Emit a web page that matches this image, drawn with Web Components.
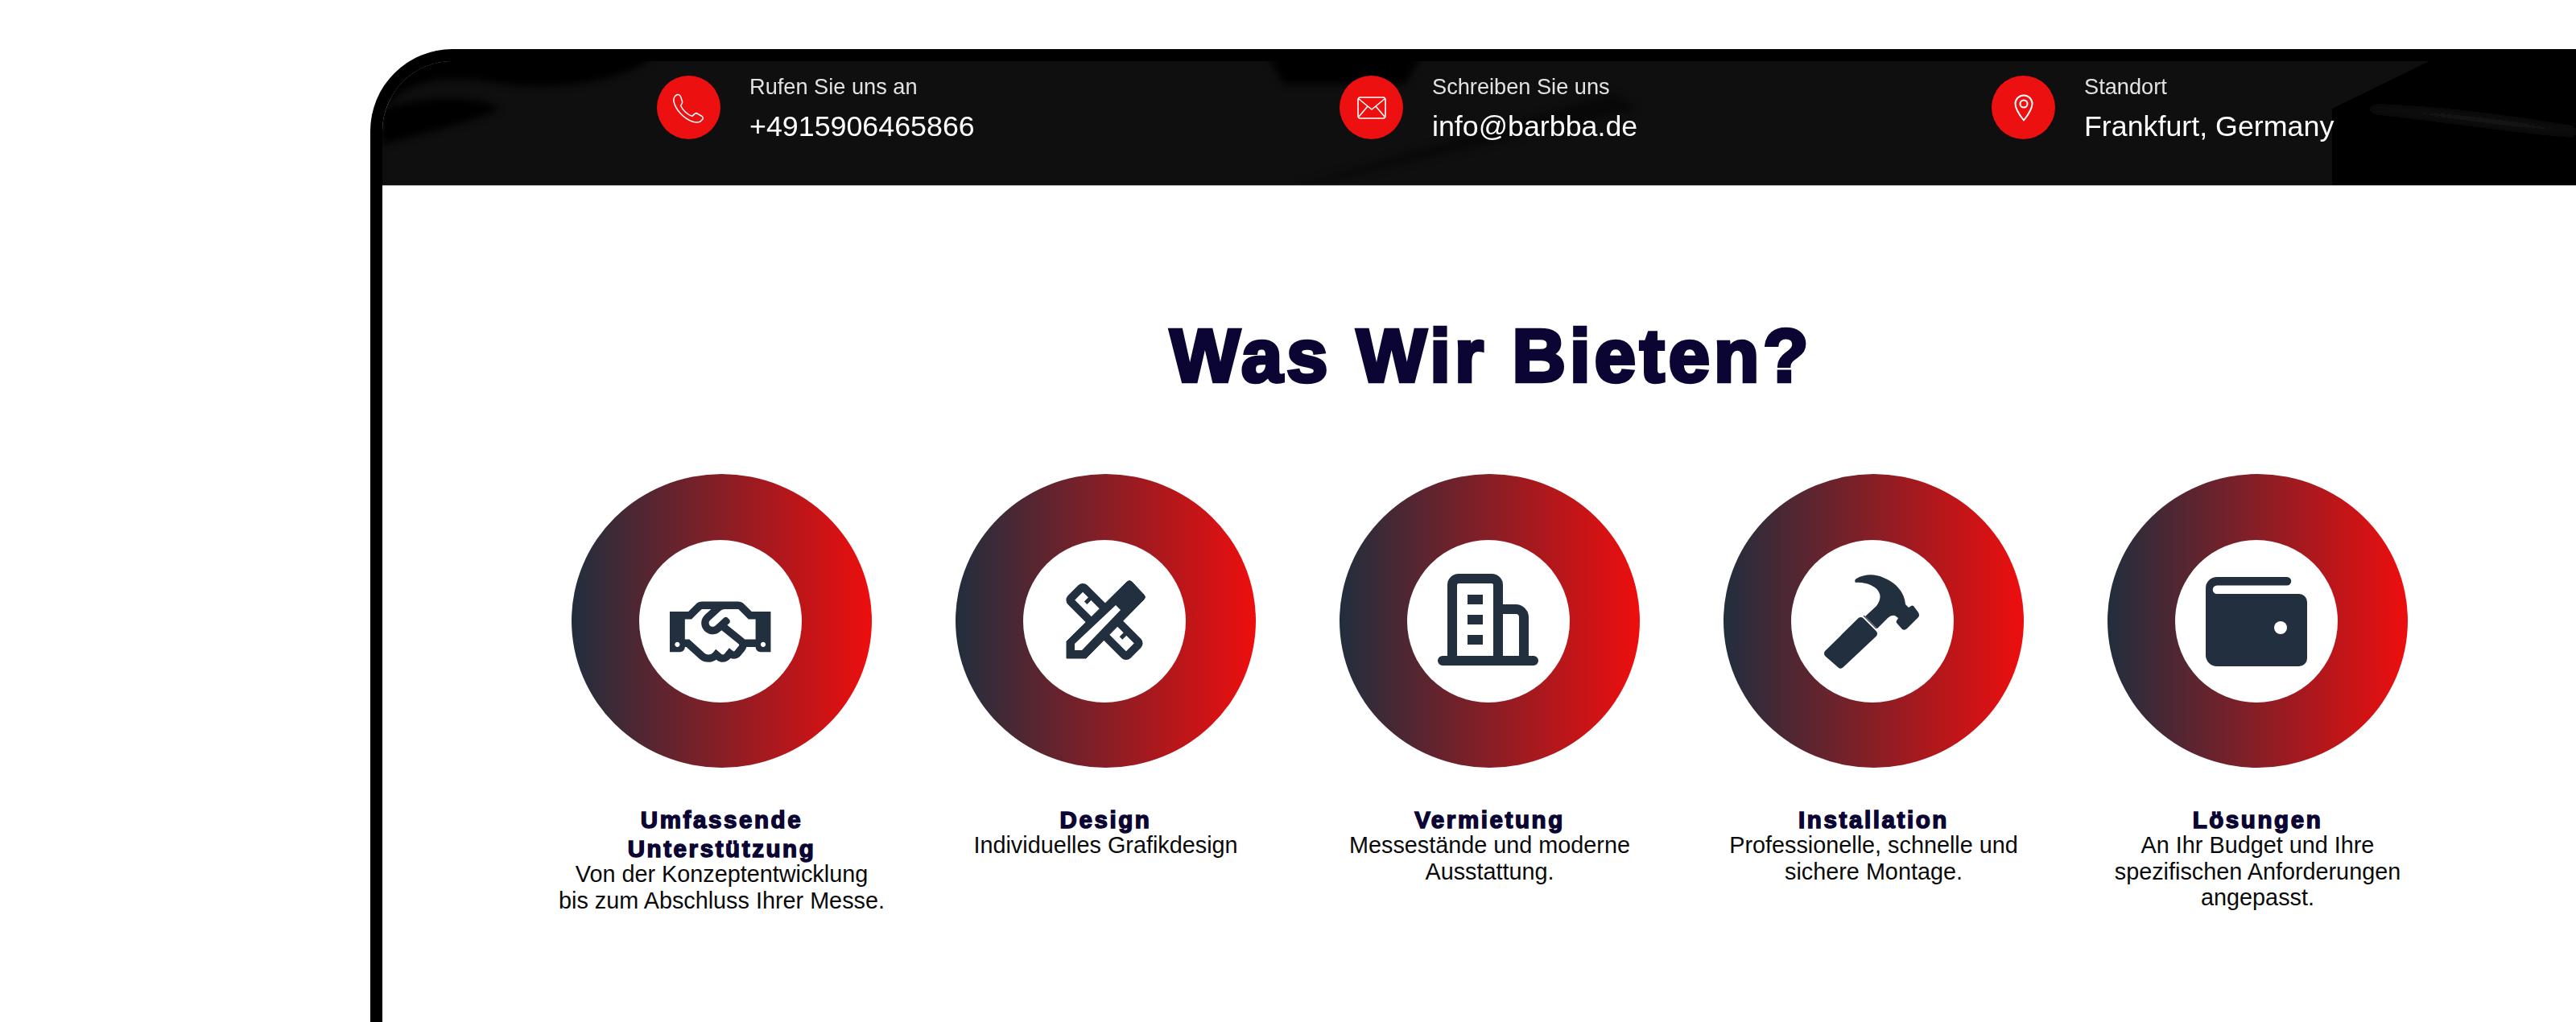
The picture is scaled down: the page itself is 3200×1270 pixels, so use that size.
<!DOCTYPE html>
<html lang="de">
<head>
<meta charset="utf-8">
<title>Was Wir Bieten?</title>
<style>
  html, body { margin: 0; height: 100%; overflow: hidden; background: #fff; font-family: "Liberation Sans", Arial, sans-serif; }
</style>
</head>
<body>
<device-frame>
  <contact-bar>
    <contact-item>
      <svg slot="icon" width="40" height="40" viewBox="0 0 40 40" fill="none" stroke="#fff" stroke-width="1.5" stroke-linejoin="round"><path d="M3 5 5.500 3.500Q8 3 9.500 6L11.500 12Q12 15 9.500 17C12 23 18 28.500 24 30.500Q26 27.500 29 26.500L36 30.500Q38 32 37 34L34 37Q30 39 24 37C13 33 3 22 1 12Q.5 7 3 5Z"/></svg>
      <span slot="label">Rufen Sie uns an</span>
      <span slot="value">+4915906465866</span>
    </contact-item>
    <contact-item>
      <svg slot="icon" width="36" height="28" viewBox="0 0 36 28" fill="none" stroke="#fff" stroke-width="1.6" stroke-linejoin="round"><rect x="1" y="1" width="34" height="26" rx="3"/><path d="M2 3 18 16 34 3M2 25 13 12M34 25 23 12"/></svg>
      <span slot="label">Schreiben Sie uns</span>
      <span slot="value">info@barbba.de</span>
    </contact-item>
    <contact-item>
      <svg slot="icon" width="24" height="34" viewBox="0 0 24 34" fill="none" stroke="#fff" stroke-width="2" stroke-linejoin="round"><path d="M12 32.500C6 25 1.500 18 1.500 12A10.500 10.500 0 0 1 22.500 12C22.500 18 18 25 12 32.500Z"/><circle cx="12" cy="12" r="4.500"/></svg>
      <span slot="label">Standort</span>
      <span slot="value">Frankfurt, Germany</span>
    </contact-item>
  </contact-bar>

  <services-section>
    <span slot="title">Was Wir Bieten?</span>

    <service-card>
      <svg slot="icon" viewBox="0 0 202 202"><g transform="translate(38 64) scale(.196)"><path d="M519.2 127.900l-47.600-47.600A56.252 56.252 0 0 0 432 64H205.200c-14.800 0-29.100 5.900-39.600 16.300L118 127.900H0v255.700h64c17.600 0 31.800-14.200 31.900-31.700h9.100l84.600 76.400c30.900 25.100 73.800 25.700 105.600 3.800 12.500 10.800 26 15.900 41.100 15.900 18.200 0 35.300-7.400 48.800-24 22.100 8.700 48.200 2.600 64-16.800l26.200-32.300c5.600-6.900 9.100-14.800 10.900-23h57.900c.1 17.500 14.400 31.700 32 31.700h64V127.900H519.200zM48 351.600c-8.800 0-16-7.200-16-16s7.200-16 16-16 16 7.200 16 16c0 8.900-7.200 16-16 16zm390-6.900l-26.100 32.200c-2.800 3.400-7.800 4-11.300 1.200l-23.900-19.400-30 36.500c-6 7.300-15 4.800-18 2.400l-36.800-31.500-15.600 19.200c-13.900 17.100-39.200 19.700-55.300 6.600l-97.300-88H96V175.800h41.900l61.700-61.600c2-.8 3.700-1.500 5.700-2.300H262l-38.700 35.500c-29.400 26.900-31.100 72.300-4.400 101.300 14.800 16.200 61.200 41.200 101.500 4.400l8.200-7.500 108.200 87.800c3.400 2.800 3.900 7.900 1.200 11.300zm106-40.800h-69.200c-2.300-2.800-4.900-5.400-7.700-7.700l-102.700-83.400 12.500-11.400c6.500-6 7-16.100 1-22.600L367 167.100c-6-6.500-16.100-6.900-22.600-1l-55.200 50.600c-9.500 8.700-25.700 9.400-34.600 0-9.300-9.900-8.500-25.100 1.200-33.900l65.600-60.100c7.400-6.800 17-10.500 27-10.500l83.700-.2c2.100 0 4.100.8 5.500 2.300l61.700 61.600H544v128zm48 47.700c-8.800 0-16-7.200-16-16s7.200-16 16-16 16 7.200 16 16c0 8.800-7.200 16-16 16z" fill="#222f3e"/></g></svg>
      <span slot="title">Umfassende Unterstützung</span>
      Von der Konzeptentwicklung bis zum Abschluss Ihrer Messe.
    </service-card>

    <service-card>
      <svg slot="icon" viewBox="0 0 202 202" fill="none" stroke="#222f3e"><g transform="translate(101 101.500) rotate(45)"><rect x="-50" y="-12" width="100" height="24" rx="3" stroke-width="10"/><path d="M-33-9V0M29-9V0" stroke-width="5"/></g><path d="M54 147V126L129 52Q132 49 135 52L150 68Q153 71 150 74L78 147Z" fill="#222f3e" stroke="#222f3e" stroke-width="1" stroke-linejoin="round"/><path d="M115 81 121 87 73 137H64V129Z" fill="#fff" stroke="none"/></svg>
      <span slot="title">Design</span>
      Individuelles Grafikdesign
    </service-card>

    <service-card>
      <svg slot="icon" viewBox="0 0 202 202" fill="none" stroke="#222f3e" stroke-width="12" stroke-linecap="round"><path d="M44 150H157M56 150V56A8 8 0 0 1 64 48H105A8 8 0 0 1 113 56V150M113 86H135A10 10 0 0 1 145 96V150"/><path d="M75 68H94V80H75ZM75 93H94V105H75ZM75 118H94V130H75Z" fill="#222f3e" stroke="none"/></svg>
      <span slot="title">Vermietung</span>
      Messestände und moderne Ausstattung.
    </service-card>

    <service-card>
      <svg slot="icon" viewBox="0 0 202 202" fill="#222f3e"><path d="M80 53Q78 50 81 48C92 42 104 42 115 47 130 53 141 65 142 80L146 84 149 82Q150.500 81 152 82L158 90Q160 94 158 96L144 110Q141 113 138 111L131 103Q130 101 132 99L133 97 129 94Q124 93 120 97L107 110 92 95 106 82Q112 74 110 67C107 57 92 52 80 53Z"/><path d="M86.500 100.500 102.500 116.500 61.500 155 45.500 141Z" stroke="#222f3e" stroke-width="9" stroke-linejoin="round"/><path d="M90 94 106 110" stroke="#454f60" stroke-width="1.500"/></svg>
      <span slot="title">Installation</span>
      Professionelle, schnelle und sichere Montage.
    </service-card>

    <service-card>
      <svg slot="icon" viewBox="0 0 202 202"><path d="M52 46H139A5.200 5.200 0 0 1 139 56.500H52A5.200 5.200 0 0 0 52 67H154A10 10 0 0 1 164 77V147A10 10 0 0 1 154 157H52A14 14 0 0 1 38 143V60A14 14 0 0 1 52 46Z" fill="#222f3e"/><circle cx="131" cy="109" r="8" fill="#fff"/></svg>
      <span slot="title">Lösungen</span>
      An Ihr Budget und Ihre spezifischen Anforderungen angepasst.
    </service-card>
  </services-section>
</device-frame>

<script>
class DeviceFrame extends HTMLElement {
  constructor() {
    super();
    this.attachShadow({ mode: "open" });
    this.shadowRoot.innerHTML = `
      <style>
        :host {
          display: block;
          box-sizing: border-box;
          margin: 61px 0 0 460px;
          height: 1209px;
          border: solid #000;
          border-width: 15px 0 0 15px;
          border-top-left-radius: 102px;
          overflow: hidden;
          background: #fff;
        }
      </style>
      <slot></slot>
    `;
  }
}

class ContactBar extends HTMLElement {
  constructor() {
    super();
    this.attachShadow({ mode: "open" });
    this.shadowRoot.innerHTML = `
      <style>
        :host {
          display: block;
          position: relative;
          height: 154px;
          background: #0e0f0e;
          border-bottom: 1px solid #a9abb0;
          overflow: hidden;
        }
        .photo { position: absolute; inset: 0; width: 100%; height: 100%; }
        .row {
          position: relative;
          display: flex;
          padding: 18px 0 0 341px;
        }
        ::slotted(contact-item:nth-child(1)) { width: 848px; }
        ::slotted(contact-item:nth-child(2)) { width: 810px; }
      </style>
      <svg class="photo" viewBox="0 0 2725 154" preserveAspectRatio="none">
        <defs><filter id="soft"><feGaussianBlur stdDeviation="5"/></filter></defs>
        <g filter="url(#soft)" fill="#000">
          <path d="M-10 -10H340C310 25 210 40 130 25 70 15 20 30 10 55Z"/>
          <path d="M0 60C60 40 130 45 145 60 100 80 40 90 0 105Z"/>
          <path d="M1100 -5H1290L1270 28H1120Z"/>
          <path d="M1530 40 1138 154H1150L1560 60Z" opacity=".45"/>
        </g>
        <path d="M2422 154V59L2543 0H2725V154Z" fill="#000"/>
        <path d="M2466 62C2560 72 2660 88 2725 92V84C2640 70 2550 58 2472 56Z" fill="#141414" filter="url(#soft)"/>
      </svg>
      <div class="row"><slot></slot></div>
    `;
  }
}

class ContactItem extends HTMLElement {
  constructor() {
    super();
    this.attachShadow({ mode: "open" });
    this.shadowRoot.innerHTML = `
      <style>
        :host { display: flex; align-items: flex-start; gap: 36px; color: #fff; }
        .badge {
          flex: none;
          width: 79px;
          height: 79px;
          border-radius: 50%;
          background: #ec1010;
          display: flex;
          align-items: center;
          justify-content: center;
        }
        .label { display: block; font-size: 27.2px; line-height: 32px; color: #e2e2e2; margin-top: -2px; }
        .value { display: block; font-size: 35.8px; line-height: 42px; margin-top: 12px; white-space: nowrap; }
      </style>
      <div class="badge"><slot name="icon"></slot></div>
      <div>
        <span class="label"><slot name="label"></slot></span>
        <span class="value"><slot name="value"></slot></span>
      </div>
    `;
  }
}

class ServicesSection extends HTMLElement {
  constructor() {
    super();
    this.attachShadow({ mode: "open" });
    this.shadowRoot.innerHTML = `
      <style>
        :host { display: block; padding-top: 151px; }
        h2 {
          margin: 0;
          text-align: center;
          font: 700 92px/120px "Liberation Sans", Arial, sans-serif;
          color: #0b0533;
          -webkit-text-stroke: 4.5px #0b0533;
          letter-spacing: 5.1px;
          padding-left: 30px;
        }
        .grid {
          display: grid;
          grid-template-columns: repeat(5, 477px);
          padding: 87px 0 0 183px;
        }
      </style>
      <h2><slot name="title"></slot></h2>
      <div class="grid"><slot></slot></div>
    `;
  }
}

class ServiceCard extends HTMLElement {
  constructor() {
    super();
    this.attachShadow({ mode: "open" });
    this.shadowRoot.innerHTML = `
      <style>
        :host {
          display: flex;
          flex-direction: column;
          align-items: center;
          text-align: center;
          color: #0a0a0a;
          font-size: 28.8px;
          line-height: 32.6px;
        }
        .ring {
          width: 373px;
          height: 365px;
          border-radius: 50%;
          background: linear-gradient(to right, #212e3d, #ee0e0e);
          display: flex;
          align-items: center;
          justify-content: center;
        }
        .hole { width: 202px; height: 202px; border-radius: 50%; background: #fff; margin-right: 3px; }
        .hole ::slotted(svg) { display: block; width: 202px; height: 202px; }
        .text { width: 405px; margin-top: 47px; }
        h3 {
          margin: 0 auto -3px;
          width: 330px;
          font: 700 29.5px/36px "Liberation Sans", Arial, sans-serif;
          color: #0b0533;
          -webkit-text-stroke: 1.5px #0b0533;
          letter-spacing: 2.6px;
        }
      </style>
      <div class="ring"><div class="hole"><slot name="icon"></slot></div></div>
      <div class="text">
        <h3><slot name="title"></slot></h3>
        <slot></slot>
      </div>
    `;
  }
}

customElements.define("device-frame", DeviceFrame);
customElements.define("contact-bar", ContactBar);
customElements.define("contact-item", ContactItem);
customElements.define("services-section", ServicesSection);
customElements.define("service-card", ServiceCard);
</script>
</body>
</html>
